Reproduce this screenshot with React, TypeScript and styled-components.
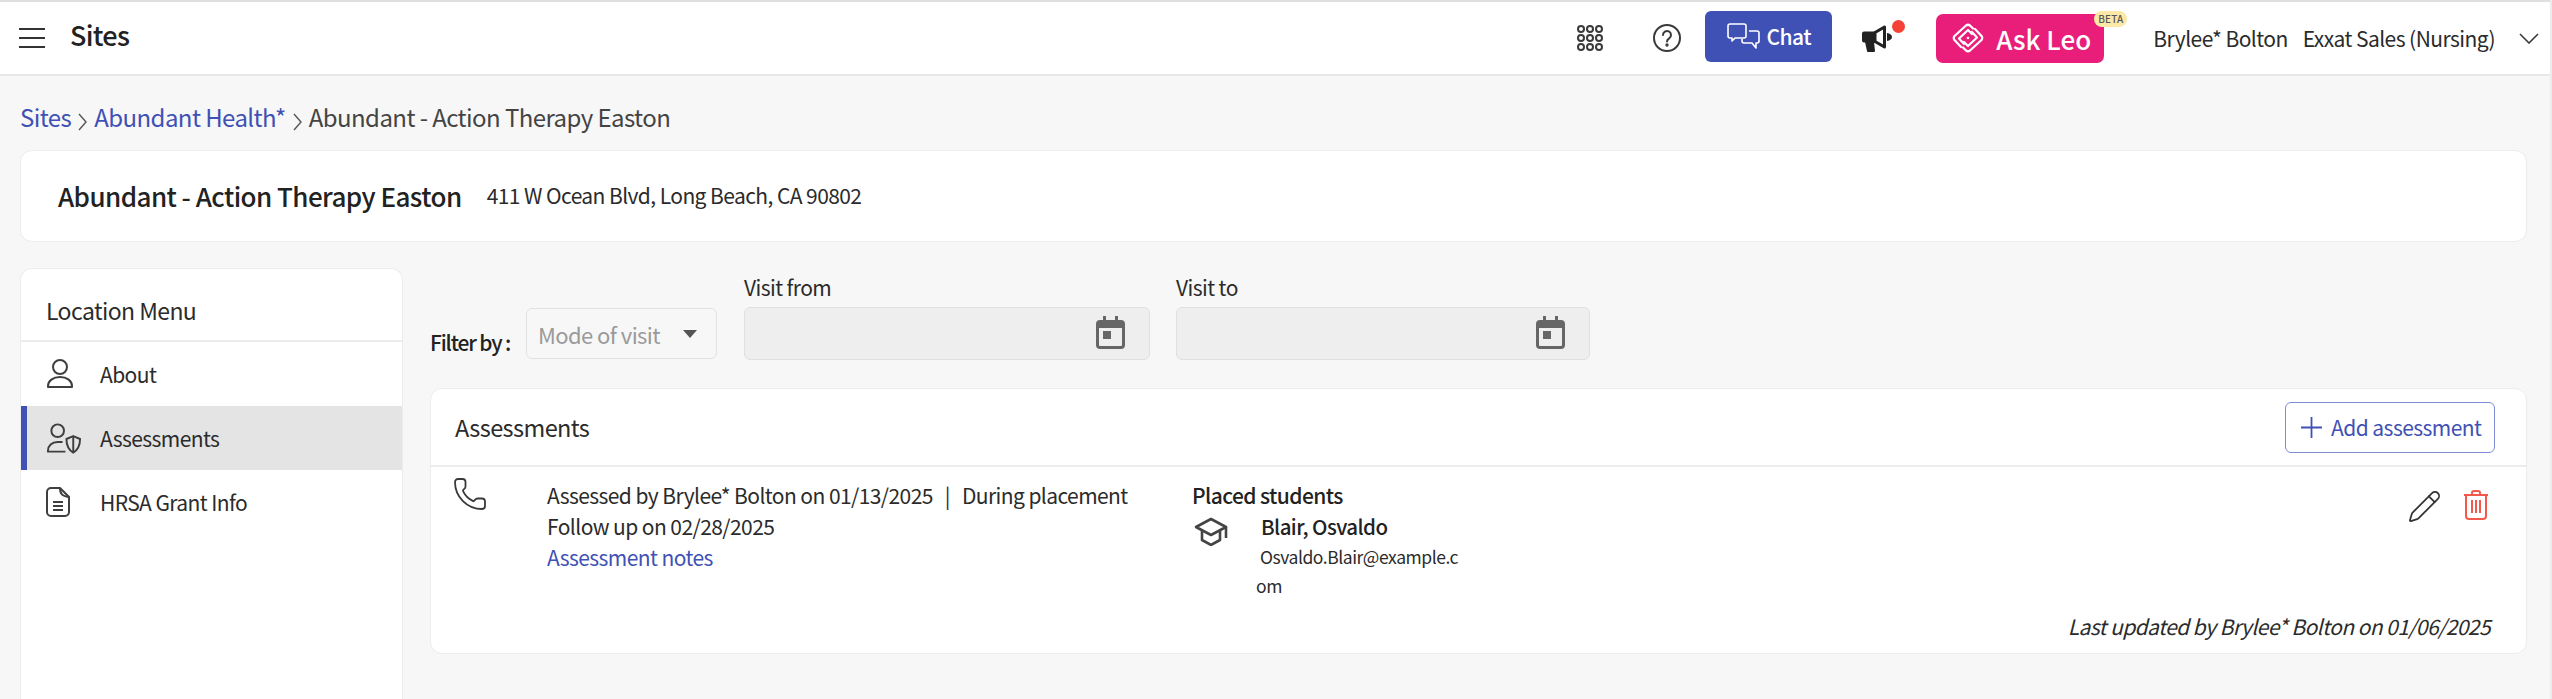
import React from 'react';
import styled, { createGlobalStyle } from 'styled-components';
import { Pencil, Phone } from 'lucide-react';

const FONT = '"Noto Sans CJK SC", "Noto Sans", sans-serif';

const GlobalStyle = createGlobalStyle`
  html, body {
    margin: 0;
    padding: 0;
    background: #f7f7f7;
    font-family: ${FONT};
    color: #2b2b2b;
    letter-spacing: -0.036em;
    overflow: hidden;
  }
  * { box-sizing: border-box; }
`;

const Page = styled.div`
  width: 2552px;
  height: 699px;
  display: flex;
  flex-direction: column;
  border-right: 2px solid #ececec;
  overflow: hidden;
`;

const TopBar = styled.header`
  height: 76px;
  flex: none;
  display: flex;
  align-items: center;
  background: #fff;
  border-top: 2px solid #e0e0e0;
  border-bottom: 2px solid #e8e8e8;
  margin-right: -2px;
  padding: 0 13px 0 19px;
`;

const Burger = styled.span`
  display: flex;
  width: 26px;
  color: #333;
`;

const PageTitle = styled.h1`
  margin: 0 0 6px 25px;
  font-size: 27px;
  line-height: 36px;
  font-weight: 500;
  letter-spacing: -0.026em;
  color: #222;
  flex: 1;
`;

const IconSlot = styled.span<{ $ml: number }>`
  display: flex;
  margin-left: ${p => p.$ml}px;
  color: #3a3a3a;
`;

const ChatButton = styled.button`
  width: 127px;
  height: 51px;
  margin: 0 0 4px 24px;
  display: flex;
  align-items: center;
  justify-content: center;
  gap: 7px;
  background: #3f51b5;
  border: none;
  border-radius: 6px;
  color: #fff;
  font-family: ${FONT};
  font-size: 21px;
  font-weight: 500;
  letter-spacing: -0.026em;
  padding: 0;
`;

const Megaphone = styled.span`
  position: relative;
  display: flex;
  margin-left: 30px;
`;

const RedDot = styled.span`
  position: absolute;
  top: -5px;
  right: -13px;
  width: 13px;
  height: 13px;
  border-radius: 50%;
  background: #f44336;
`;

const LeoButton = styled.button`
  position: relative;
  width: 168px;
  height: 49px;
  margin-left: 44px;
  display: flex;
  align-items: center;
  gap: 12px;
  padding: 0 0 0 16px;
  background: #e91e7a;
  border: none;
  border-radius: 7px;
  color: #fff;
  font-family: ${FONT};
  font-size: 26px;
  font-weight: 500;
  letter-spacing: 0;
`;

const BetaBadge = styled.span`
  position: absolute;
  top: -3px;
  right: -23px;
  width: 33px;
  height: 16px;
  text-align: center;
  border-radius: 8px;
  background: #fde8a8;
  color: #555;
  font-size: 10px;
  line-height: 16px;
  font-weight: 500;
  letter-spacing: 0.2px;
`;

const UserText = styled.span<{ $ml: number }>`
  margin-left: ${p => p.$ml}px;
  font-size: 21px;
  line-height: 30px;
  letter-spacing: -0.026em;
  color: #2b2b2b;
`;

const Crumbs = styled.nav`
  height: 74px;
  flex: none;
  display: flex;
  align-items: flex-end;
  padding: 0 0 16px 20px;
  font-size: 24px;
  line-height: 34px;
  color: #444;
`;

const CrumbLink = styled.a`
  color: #3f51b5;
`;

const CrumbSep = styled.span`
  display: flex;
  align-self: flex-end;
  margin: 0 6px 3px 7px;
  color: #555;
`;

const HeroCard = styled.section`
  height: 92px;
  flex: none;
  margin: 0 23px 0 20px;
  display: flex;
  align-items: center;
  padding-left: 37px;
  gap: 25px;
  background: #fff;
  border: 1px solid #ececec;
  border-radius: 12px;
`;

const HeroName = styled.h2`
  margin: 0;
  font-size: 26px;
  line-height: 36px;
  font-weight: 500;
  letter-spacing: -0.55px;
  color: #222;
`;

const HeroAddress = styled.span`
  font-size: 21px;
  line-height: 30px;
  margin-bottom: 3px;
  color: #2b2b2b;
`;

const Body = styled.div`
  flex: 1;
  min-height: 0;
  display: flex;
  padding: 26px 23px 0 20px;
  gap: 27px;
`;

const Sidebar = styled.aside`
  width: 383px;
  flex: none;
  background: #fff;
  border: 1px solid #ececec;
  border-bottom: none;
  border-radius: 12px 12px 0 0;
`;

const SidebarTitle = styled.div`
  height: 73px;
  display: flex;
  align-items: flex-end;
  padding: 0 0 13px 25px;
  border-bottom: 2px solid #ececec;
  font-size: 23px;
  line-height: 34px;
  color: #2b2b2b;
`;

const MenuRow = styled.div<{ $active?: boolean }>`
  height: 64px;
  display: flex;
  align-items: center;
  gap: 18px;
  padding-left: ${p => (p.$active ? 19 : 25)}px;
  font-size: 21px;
  line-height: 30px;
  color: #2b2b2b;
  background: ${p => (p.$active ? '#e4e4e4' : 'transparent')};
  border-left: ${p => (p.$active ? '6px solid #3f51b5' : 'none')};
`;

const MenuIconBox = styled.span`
  display: flex;
  width: 36px;
  color: #3f3f3f;
`;

const Main = styled.main`
  flex: 1;
  min-width: 0;
  display: flex;
  flex-direction: column;
`;

const Filters = styled.div`
  height: 120px;
  flex: none;
  display: flex;
  align-items: flex-end;
  padding-bottom: 28px;
`;

const FilterLabel = styled.span`
  width: 96px;
  font-size: 21px;
  line-height: 30px;
  font-weight: 500;
  letter-spacing: -0.055em;
  margin-bottom: 3px;
  color: #222;
`;

const ModeSelect = styled.div`
  width: 191px;
  height: 51px;
  margin: 0 27px 1px 0;
  display: flex;
  align-items: center;
  justify-content: space-between;
  padding: 0 19px 0 11px;
  background: #f7f7f7;
  border: 1px solid #e2e2e2;
  border-radius: 6px;
  font-size: 22px;
  color: #9a9a9a;
`;

const Caret = styled.span`
  width: 0;
  height: 0;
  border-left: 7px solid transparent;
  border-right: 7px solid transparent;
  border-top: 8px solid #555;
`;

const DateField = styled.div<{ $width: number; $ml?: number }>`
  width: ${p => p.$width}px;
  margin-left: ${p => p.$ml ?? 0}px;
`;

const DateLabel = styled.div`
  font-size: 21px;
  line-height: 30px;
  color: #2b2b2b;
  margin-bottom: 5px;
`;

const DateInput = styled.div`
  height: 53px;
  display: flex;
  align-items: center;
  justify-content: flex-end;
  padding: 0 24px 3px 0;
  background: #eeeeee;
  border: 1px solid #e0e0e0;
  border-radius: 6px;
  color: #666;
`;

const AssessCard = styled.section`
  height: 266px;
  flex: none;
  display: flex;
  flex-direction: column;
  background: #fff;
  border: 1px solid #ececec;
  border-radius: 12px;
`;

const AssessHead = styled.div`
  height: 78px;
  flex: none;
  display: flex;
  align-items: center;
  justify-content: space-between;
  padding: 0 31px 0 24px;
  border-bottom: 2px solid #ececec;
`;

const AssessTitle = styled.h3`
  margin: 0;
  font-size: 23.5px;
  line-height: 34px;
  font-weight: 400;
  color: #2b2b2b;
`;

const AddButton = styled.button`
  width: 210px;
  height: 51px;
  display: flex;
  align-items: center;
  gap: 9px;
  padding: 0 0 0 15px;
  background: #fff;
  border: 1.5px solid #7f8cd4;
  border-radius: 6px;
  color: #3f51b5;
  font-family: ${FONT};
  font-size: 21px;
  letter-spacing: -0.026em;
`;

const AssessBody = styled.div`
  flex: 1;
  position: relative;
  display: flex;
  padding: 13px 37px 0 25px;
`;

const ModeIcon = styled.span`
  display: flex;
  align-items: flex-start;
  width: 95px;
  height: 36px;
  flex: none;
  margin: -4px 0 0 -4px;
  color: #3a3a3a;
`;

const Details = styled.div`
  width: 645px;
  flex: none;
  font-size: 21px;
  line-height: 31px;
  color: #2b2b2b;
`;

const Divider = styled.span`
  margin: 0 12px;
`;

const NotesLink = styled.a`
  color: #3f51b5;
`;

const Students = styled.div`
  flex: 1;
  font-size: 21px;
  line-height: 31px;
`;

const StudentsTitle = styled.div`
  font-weight: 500;
  color: #222;
`;

const StudentRow = styled.div`
  display: flex;
`;

const GradIcon = styled.span`
  display: flex;
  width: 64px;
  flex: none;
  color: #444;
  padding: 6px 0 0 2px;
`;

const StudentInfo = styled.div`
  width: 208px;
`;

const StudentName = styled.div`
  font-size: 20.5px;
  font-weight: 500;
  color: #222;
  padding-left: 5px;
`;

const StudentMail = styled.div`
  font-size: 17.5px;
  line-height: 29px;
  letter-spacing: -0.026em;
  text-indent: 4px;
  word-break: break-all;
  color: #2b2b2b;
`;

const Actions = styled.div`
  display: flex;
  align-items: flex-start;
  gap: 21px;
  color: #333;
  padding-top: 10px;
`;

const EditGlyph = styled.span`
  display: flex;
  margin-top: -1px;
`;

const Updated = styled.div`
  position: absolute;
  right: 36px;
  bottom: 12px;
  font-size: 21px;
  line-height: 30px;
  font-style: italic;
  color: #2b2b2b;
`;

const BurgerIcon = () => (
  <svg width="26" height="22" viewBox="0 0 26 22" stroke="currentColor" strokeWidth="2">
    <path d="M0 2h26M0 11h26M0 20h26" />
  </svg>
);

const GridDots = () => (
  <svg width="26" height="26" viewBox="0 0 26 26" fill="none" stroke="currentColor" strokeWidth="2">
    {[4, 13, 22].map(y =>
      [4, 13, 22].map(x => <circle key={`${x}-${y}`} cx={x} cy={y} r="3" />)
    )}
  </svg>
);

const HelpCircle = () => (
  <svg width="28" height="28" viewBox="0 0 28 28" fill="none" stroke="currentColor" strokeWidth="2">
    <circle cx="14" cy="14" r="13" />
    <path d="M10 11a4 4 0 1 1 6.200 3.300c-1.400.9-2.200 1.600-2.200 3.200" strokeLinecap="round" />
    <circle cx="14" cy="21" r="0.7" fill="currentColor" />
  </svg>
);

const ChatBubbles = () => (
  <svg width="33" height="27" viewBox="0 0 33 27" fill="none" stroke="#fff" strokeWidth="1.6" strokeLinejoin="round">
    <path d="M3 1h14a2 2 0 0 1 2 2v10a2 2 0 0 1-2 2H8l-3 3v-3H3a2 2 0 0 1-2-2V3a2 2 0 0 1 2-2z" />
    <path d="M22 8h8a2 2 0 0 1 2 2v8a2 2 0 0 1-2 2h-1v5l-4-5h-8a2 2 0 0 1-2-2v-2" />
  </svg>
);

const MegaphoneIcon = () => (
  <svg width="30" height="27" viewBox="0 0 30 27">
    <path d="M2 6.500h11v11H2a2 2 0 0 1-2-2v-7a2 2 0 0 1 2-2z" fill="#222" />
    <path d="M3 17h9l1 9a1 1 0 0 1-1 1H6a1 1 0 0 1-1-1z" fill="#222" />
    <path d="M13 7.500L22.500 2v20L13 16.500z" fill="#fff" stroke="#222" strokeWidth="3" strokeLinejoin="round" />
    <path d="M25 8c3 .5 5 2 5 4s-2 3.500-5 4z" fill="#222" />
  </svg>
);

const LeoMark = () => (
  <svg width="32" height="30" viewBox="0 0 32 30" fill="none" stroke="#fff" strokeWidth="2.2" strokeLinecap="round" strokeLinejoin="round">
    <path d="M9 24L2.500 17Q1 15 2.500 13L14 2.500Q16 1 18 2.500L21 5.500" />
    <path d="M23 6L29.500 13Q31 15 29.500 17L18 27.500Q16 29 14 27.500L11 24.500" />
    <path d="M12 21L7 15.500L16 7L20 11" />
    <path d="M20 9L25 14.500L16 23L12 19" />
    <circle cx="16" cy="15" r="1.300" fill="#fff" stroke="none" />
  </svg>
);

const PersonIcon = () => (
  <svg width="28" height="30" viewBox="0 0 28 30" fill="none" stroke="currentColor" strokeWidth="2">
    <circle cx="14" cy="8" r="7" />
    <path d="M2 28v-1c0-5 5-9 12-9s12 4 12 9v1z" strokeLinejoin="round" />
  </svg>
);

const PersonShieldIcon = () => (
  <svg width="37" height="31" viewBox="0 0 37 31" fill="none" stroke="currentColor" strokeWidth="2">
    <circle cx="12" cy="7.500" r="6.500" />
    <path d="M20 29H2v-1c0-5 4-9 10-9h5" strokeLinejoin="round" />
    <path d="M28 13l7 3c0 7-2 11-7 14-5-3-7-7-7-14z" strokeLinejoin="round" />
    <path d="M28 13v17" />
  </svg>
);

const DocIcon = () => (
  <svg width="24" height="30" viewBox="0 0 24 30" fill="none" stroke="currentColor" strokeWidth="2">
    <path d="M5 1h9l9 9v15a4 4 0 0 1-4 4H5a4 4 0 0 1-4-4V5a4 4 0 0 1 4-4z" strokeLinejoin="round" />
    <path d="M14 1c0 6 2 8 9 9" />
    <path d="M7 15h10M7 19h10M7 23h10" />
  </svg>
);

const CalendarIcon = () => (
  <svg width="29" height="33" viewBox="0 0 29 33" fill="currentColor">
    <path d="M7 0h3v4h9V0h3v4h3a4 4 0 0 1 4 4v21a4 4 0 0 1-4 4H4a4 4 0 0 1-4-4V8a4 4 0 0 1 4-4h3zM3 12v17a1 1 0 0 0 1 1h21a1 1 0 0 0 1-1V12z" fillRule="evenodd" />
    <rect x="7" y="15" width="8" height="8" />
  </svg>
);

const GraduationCap = () => (
  <svg width="34" height="29" viewBox="0 0 34 29" fill="none" stroke="currentColor" strokeWidth="2.600" strokeLinejoin="round">
    <path d="M17 2L2 10l15 8 15-8z" />
    <path d="M8 14v9l9 5 9-5v-9" />
    <path d="M32 10v11" />
  </svg>
);

const TrashIcon = () => (
  <svg width="26" height="30" viewBox="0 0 26 30" fill="none" stroke="#f4574c" strokeWidth="2" strokeLinejoin="round">
    <path d="M1 5h24" />
    <path d="M9 5V3a2 2 0 0 1 2-2h4a2 2 0 0 1 2 2v2" />
    <path d="M3 5v21a3 3 0 0 0 3 3h14a3 3 0 0 0 3-3V5" />
    <path d="M9 10v13M13 10v13M17 10v13" />
  </svg>
);

const PlusIcon = () => (
  <svg width="21" height="21" viewBox="0 0 21 21" stroke="currentColor" strokeWidth="1.800">
    <path d="M10.500 0v21M0 10.500h21" />
  </svg>
);

const Angle = () => (
  <svg width="10" height="18" viewBox="0 0 10 18" fill="none" stroke="currentColor" strokeWidth="1.400">
    <path d="M1 1l7 8-7 8" />
  </svg>
);

const DownAngle = () => (
  <svg width="20" height="11" viewBox="0 0 20 11" fill="none" stroke="currentColor" strokeWidth="1.600">
    <path d="M1 1l9 9 9-9" />
  </svg>
);

const MENU_ITEMS = [
  { label: 'About', icon: <PersonIcon /> },
  { label: 'Assessments', icon: <PersonShieldIcon />, active: true },
  { label: 'HRSA Grant Info', icon: <DocIcon /> }
];

const App: React.FC = () => {
  return (
    <Page>
      <GlobalStyle />
      <TopBar>
        <Burger><BurgerIcon /></Burger>
        <PageTitle>Sites</PageTitle>
        <IconSlot $ml={0}><GridDots /></IconSlot>
        <IconSlot $ml={50}><HelpCircle /></IconSlot>
        <ChatButton><ChatBubbles />Chat</ChatButton>
        <Megaphone><MegaphoneIcon /><RedDot /></Megaphone>
        <LeoButton>
          <LeoMark />
          Ask Leo
          <BetaBadge>BETA</BetaBadge>
        </LeoButton>
        <UserText $ml={49}>Brylee* Bolton</UserText>
        <UserText $ml={15}>Exxat Sales (Nursing)</UserText>
        <IconSlot $ml={24}><DownAngle /></IconSlot>
      </TopBar>

      <Crumbs>
        <CrumbLink>Sites</CrumbLink>
        <CrumbSep><Angle /></CrumbSep>
        <CrumbLink>Abundant Health*</CrumbLink>
        <CrumbSep><Angle /></CrumbSep>
        Abundant - Action Therapy Easton
      </Crumbs>

      <HeroCard>
        <HeroName>Abundant - Action Therapy Easton</HeroName>
        <HeroAddress>411 W Ocean Blvd, Long Beach, CA 90802</HeroAddress>
      </HeroCard>

      <Body>
        <Sidebar>
          <SidebarTitle>Location Menu</SidebarTitle>
          {MENU_ITEMS.map(item => (
            <MenuRow key={item.label} $active={item.active}>
              <MenuIconBox>{item.icon}</MenuIconBox>
              {item.label}
            </MenuRow>
          ))}
        </Sidebar>

        <Main>
          <Filters>
            <FilterLabel>Filter by :</FilterLabel>
            <ModeSelect>Mode of visit<Caret /></ModeSelect>
            <DateField $width={406}>
              <DateLabel>Visit from</DateLabel>
              <DateInput><CalendarIcon /></DateInput>
            </DateField>
            <DateField $width={414} $ml={26}>
              <DateLabel>Visit to</DateLabel>
              <DateInput><CalendarIcon /></DateInput>
            </DateField>
          </Filters>

          <AssessCard>
            <AssessHead>
              <AssessTitle>Assessments</AssessTitle>
              <AddButton><PlusIcon />Add assessment</AddButton>
            </AssessHead>
            <AssessBody>
              <ModeIcon><Phone size={36} strokeWidth={1.2} /></ModeIcon>
              <Details>
                <div>Assessed by Brylee* Bolton on 01/13/2025<Divider>|</Divider>During placement</div>
                <div>Follow up on 02/28/2025</div>
                <NotesLink>Assessment notes</NotesLink>
              </Details>
              <Students>
                <StudentsTitle>Placed students</StudentsTitle>
                <StudentRow>
                  <GradIcon><GraduationCap /></GradIcon>
                  <StudentInfo>
                    <StudentName>Blair, Osvaldo</StudentName>
                    <StudentMail>Osvaldo.Blair@example.com</StudentMail>
                  </StudentInfo>
                </StudentRow>
              </Students>
              <Actions>
                <EditGlyph><Pencil size={35} strokeWidth={1.2} /></EditGlyph>
                <TrashIcon />
              </Actions>
              <Updated>Last updated by Brylee* Bolton on 01/06/2025</Updated>
            </AssessBody>
          </AssessCard>
        </Main>
      </Body>
    </Page>
  );
};

export default App;
